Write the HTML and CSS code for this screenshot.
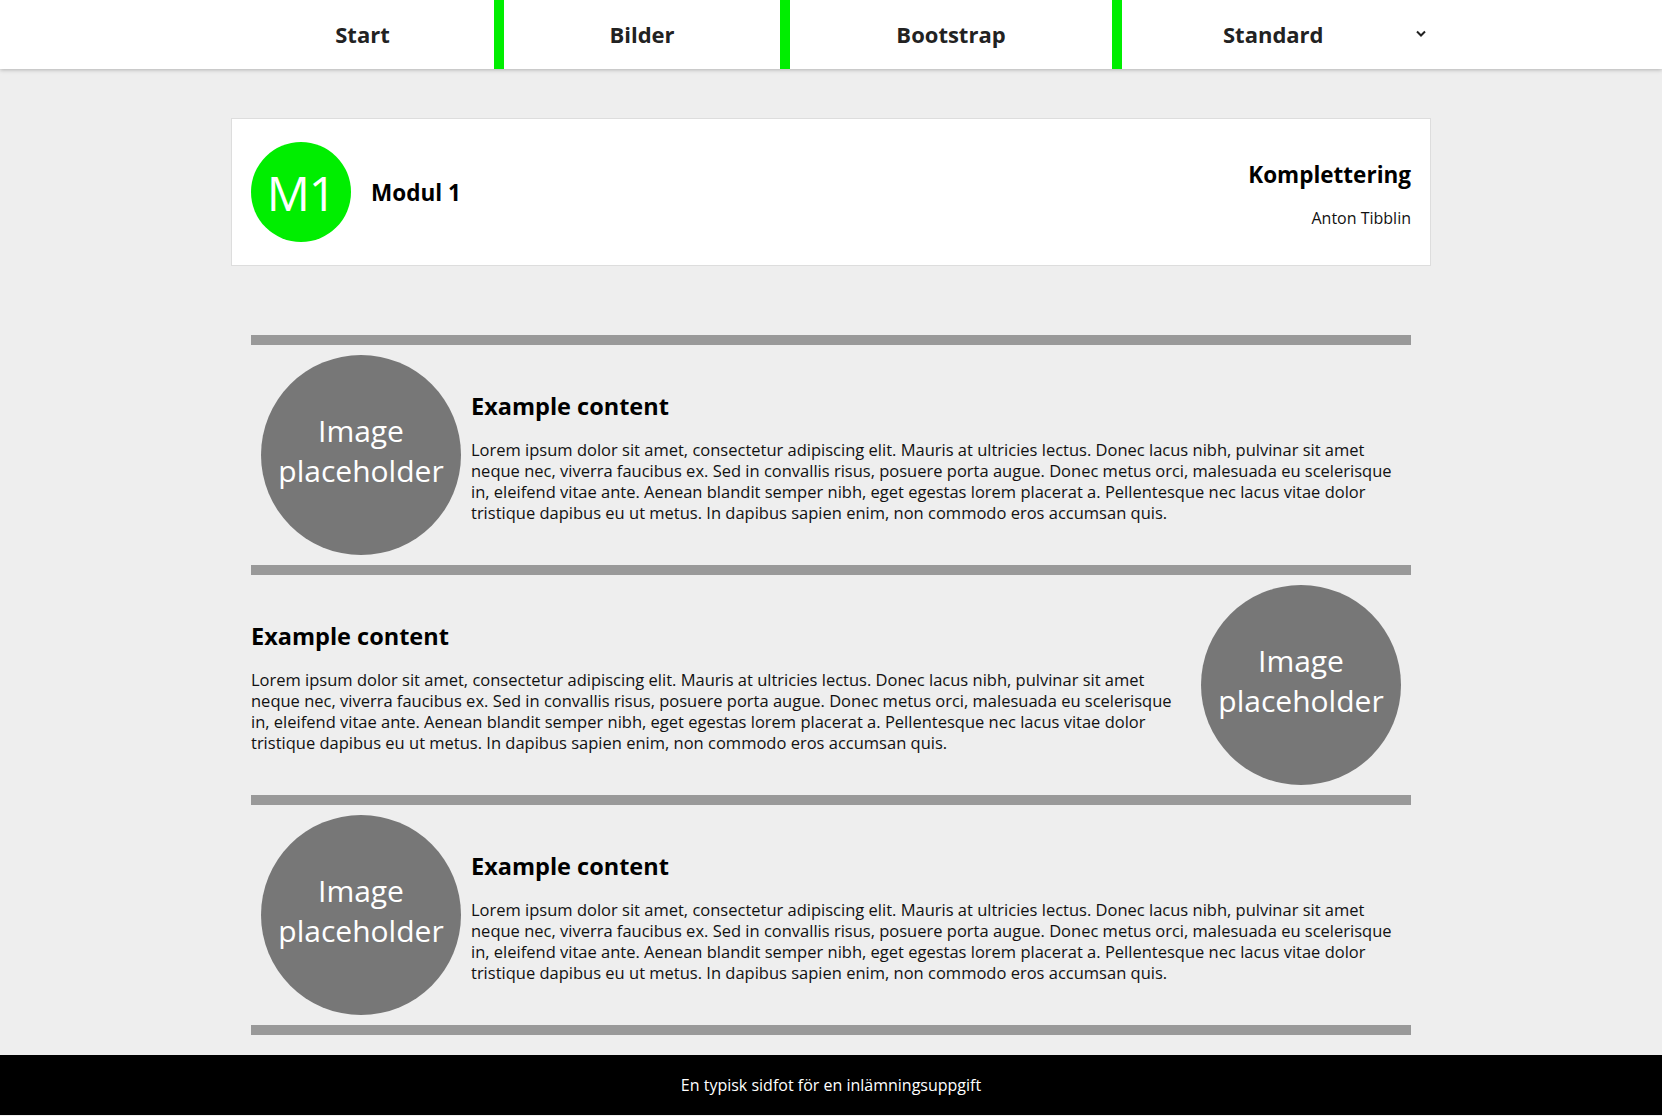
FILE: index.html
```html
<!DOCTYPE html>
<html lang="sv">
<head>
<meta charset="utf-8">
<title>Modul 1 - Komplettering</title>
<link rel="stylesheet" href="styles.css">
</head>
<body>
<nav class="topnav">
  <div class="nav-inner">
    <a class="nav-item nav-start" href="#">Start</a>
    <a class="nav-item nav-bilder" href="#">Bilder</a>
    <a class="nav-item nav-bootstrap" href="#">Bootstrap</a>
    <div class="nav-item nav-dropdown">
      <span>Standard</span>
      <svg class="chevron" width="10" height="7" viewBox="0 0 10 7"><polyline points="1,1.5 5,5.5 9,1.5" fill="none" stroke="#222" stroke-width="2"/></svg>
    </div>
  </div>
</nav>

<main class="container">
  <header class="card">
    <div class="card-left">
      <div class="badge">M1</div>
      <h1 class="module-title">Modul 1</h1>
    </div>
    <div class="card-right">
      <h2 class="card-heading">Komplettering</h2>
      <p class="author">Anton Tibblin</p>
    </div>
  </header>

  <section class="articles">
    <article class="row">
      <div class="placeholder">Image<br>placeholder</div>
      <div class="row-text">
        <h3>Example content</h3>
        <p>Lorem ipsum dolor sit amet, consectetur adipiscing elit. Mauris at ultricies lectus. Donec lacus nibh, pulvinar sit amet<br>neque nec, viverra faucibus ex. Sed in convallis risus, posuere porta augue. Donec metus orci, malesuada eu scelerisque<br>in, eleifend vitae ante. Aenean blandit semper nibh, eget egestas lorem placerat a. Pellentesque nec lacus vitae dolor<br>tristique dapibus eu ut metus. In dapibus sapien enim, non commodo eros accumsan quis.</p>
      </div>
    </article>
    <article class="row row-reverse">
      <div class="row-text">
        <h3>Example content</h3>
        <p>Lorem ipsum dolor sit amet, consectetur adipiscing elit. Mauris at ultricies lectus. Donec lacus nibh, pulvinar sit amet<br>neque nec, viverra faucibus ex. Sed in convallis risus, posuere porta augue. Donec metus orci, malesuada eu scelerisque<br>in, eleifend vitae ante. Aenean blandit semper nibh, eget egestas lorem placerat a. Pellentesque nec lacus vitae dolor<br>tristique dapibus eu ut metus. In dapibus sapien enim, non commodo eros accumsan quis.</p>
      </div>
      <div class="placeholder">Image<br>placeholder</div>
    </article>
    <article class="row">
      <div class="placeholder">Image<br>placeholder</div>
      <div class="row-text">
        <h3>Example content</h3>
        <p>Lorem ipsum dolor sit amet, consectetur adipiscing elit. Mauris at ultricies lectus. Donec lacus nibh, pulvinar sit amet<br>neque nec, viverra faucibus ex. Sed in convallis risus, posuere porta augue. Donec metus orci, malesuada eu scelerisque<br>in, eleifend vitae ante. Aenean blandit semper nibh, eget egestas lorem placerat a. Pellentesque nec lacus vitae dolor<br>tristique dapibus eu ut metus. In dapibus sapien enim, non commodo eros accumsan quis.</p>
      </div>
    </article>
  </section>
</main>

<footer class="footer">En typisk sidfot för en inlämningsuppgift</footer>
</body>
</html>
```

FILE: styles.css
```css
* { box-sizing: border-box; }

html, body {
  margin: 0;
  padding: 0;
}

body {
  background: #eeeeee;
  font-family: "Open Sans", "DejaVu Sans", sans-serif;
  color: #111;
}

.topnav {
  background: #fff;
  height: 69px;
  box-shadow: 0 1px 4px rgba(0, 0, 0, 0.25);
  position: relative;
  z-index: 1;
}

.nav-inner {
  width: 1200px;
  margin: 0 auto;
  height: 69px;
  display: flex;
}

.nav-item {
  display: flex;
  align-items: center;
  justify-content: center;
  height: 69px;
  padding-bottom: 2px;
  color: #222;
  text-decoration: none;
  font-weight: 700;
  font-size: 22px;
}

.nav-start { width: 263px; }
.nav-bilder { width: 286px; border-left: 10px solid #00ee00; }
.nav-bootstrap { width: 332px; border-left: 10px solid #00ee00; }
.nav-dropdown {
  width: 319px;
  border-left: 10px solid #00ee00;
  justify-content: space-between;
  padding: 0 5px 2px 101px;
}
.chevron { margin-top: -1px; }

.container {
  width: 1200px;
  margin: 49px auto 0;
}

.card {
  background: #fff;
  border: 1px solid #dddddd;
  display: flex;
  align-items: center;
  justify-content: space-between;
  padding: 23px 19px;
}

.card-left {
  display: flex;
  align-items: center;
  gap: 20px;
}

.badge {
  width: 100px;
  height: 100px;
  border-radius: 50%;
  background: #00ee00;
  color: #fff;
  display: flex;
  align-items: center;
  justify-content: center;
  font-size: 48px;
  font-weight: 400;
  letter-spacing: -1px;
}

.module-title {
  margin: 0;
  font-size: 22.5px;
  font-weight: 700;
  color: #000;
}

.card-right {
  text-align: right;
  padding-top: 4px;
}

.card-heading {
  margin: 0 0 18px;
  font-size: 22.5px;
  font-weight: 700;
  color: #000;
  line-height: 30px;
}

.author {
  margin: 0;
  font-size: 16px;
  line-height: 20px;
}

.articles {
  margin-top: 69px;
  padding: 0 20px;
}

.row {
  display: flex;
  align-items: center;
  height: 230px;
  border-top: 10px solid #999999;
}

.row:last-child {
  height: 240px;
  border-bottom: 10px solid #999999;
}

.placeholder {
  flex: 0 0 200px;
  width: 200px;
  height: 200px;
  margin: 10px;
  padding-bottom: 8px;
  border-radius: 50%;
  background: #777777;
  color: #fff;
  display: flex;
  align-items: center;
  justify-content: center;
  text-align: center;
  font-size: 30px;
  line-height: 40px;
}

.row-text {
  flex: 1;
  padding-top: 3px;
  min-width: 0;
}

.row-text h3 {
  margin: 0 0 18px;
  font-size: 23.5px;
  line-height: 30px;
  font-weight: 700;
  color: #000;
}

.row-text p {
  margin: 0;
  font-size: 16.5px;
  line-height: 21px;
  white-space: nowrap;
}

.footer {
  margin-top: 20px;
  background: #000;
  color: #fff;
  text-align: center;
  font-size: 16px;
  line-height: 20px;
  padding: 20px 0;
}
```
